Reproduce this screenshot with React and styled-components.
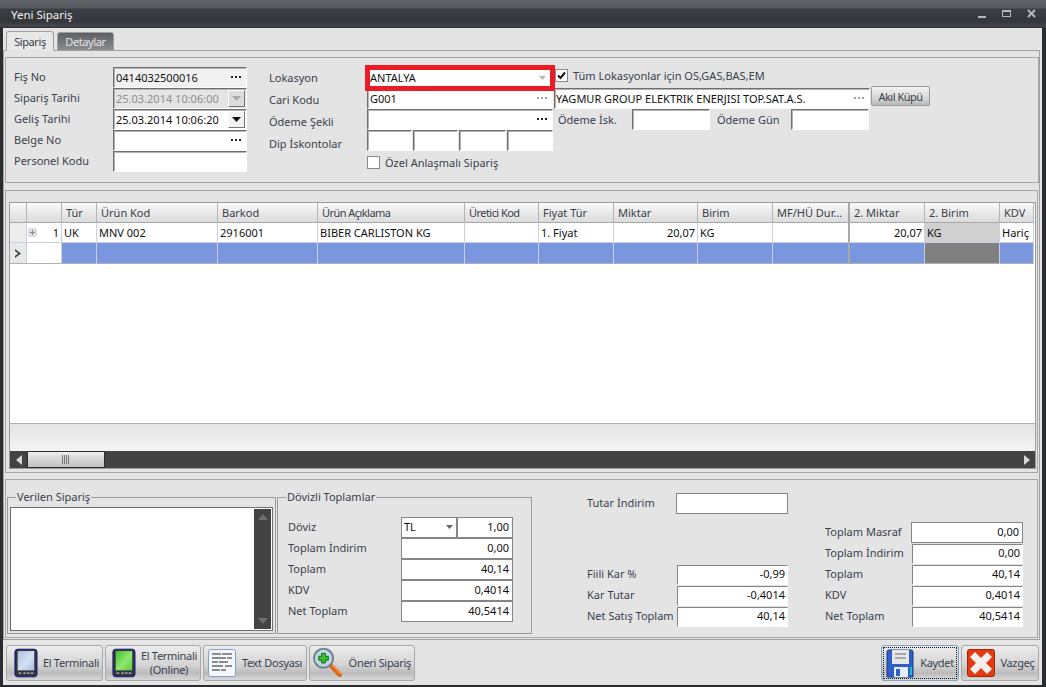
import styled, { createGlobalStyle } from 'styled-components';

const GlobalStyle = createGlobalStyle`
  html, body {
    margin: 0;
    padding: 0;
    background: #2a2c2f;
  }
  body {
    font-family: 'Noto Sans', 'Liberation Sans', sans-serif;
    font-size: 11px;
    color: #3a3f4c;
  }
`;

const columns = [
  { title: '', width: 17 },
  { title: '', width: 35 },
  { title: 'Tür', width: 35 },
  { title: 'Ürün Kod', width: 121 },
  { title: 'Barkod', width: 100 },
  { title: 'Ürün Açıklama', width: 147, tight: true },
  { title: 'Üretici Kod', width: 74, tight: true },
  { title: 'Fiyat Tür', width: 75 },
  { title: 'Miktar', width: 84 },
  { title: 'Birim', width: 75 },
  { title: 'MF/HÜ Dur…', width: 77 },
  { title: '2. Miktar', width: 75 },
  { title: '2. Birim', width: 75 },
  { title: 'KDV', width: 34 },
];

const rowValues = ['', '1', 'UK', 'MNV 002', '2916001', 'BIBER CARLISTON KG', '', '1. Fiyat', '20,07', 'KG', '', '20,07', 'KG', 'Hariç'];

const Dots = ({ faded }) => (
  <DotsIcon width="12" height="4" viewBox="0 0 12 4">
    <g fill={faded ? '#a0a0a0' : '#222'}>
      <rect x="1" y="1" width="2" height="2" />
      <rect x="5" y="1" width="2" height="2" />
      <rect x="9" y="1" width="2" height="2" />
    </g>
  </DotsIcon>
);

const DateField = ({ value, disabled }) => (
  <Field $disabled={disabled}>
    <FieldText>{value}</FieldText>
    <DropButton $disabled={disabled}>
      <svg width="9" height="5" viewBox="0 0 9 5">
        <path d="M0 0h9L4.500 5z" fill={disabled ? '#a9a9a9' : '#111'} />
      </svg>
    </DropButton>
  </Field>
);

const TerminalIcon = ({ green }) => (
  <svg width="25" height="30" viewBox="0 0 26 32">
    <rect x="1" y="1" width="24" height="30" rx="3" fill="#33363c" stroke="#10108a" />
    <defs>
      <linearGradient id={green ? 'scrG' : 'scrB'} x1="0" y1="0" x2="1" y2="1">
        <stop offset="0" stopColor={green ? '#3fc02c' : '#a9bfe4'} />
        <stop offset="0.55" stopColor={green ? '#8fe670' : '#d4e0f2'} />
        <stop offset="1" stopColor={green ? '#5ccb3f' : '#a6bde0'} />
      </linearGradient>
    </defs>
    <rect x="4" y="3" width="18" height="21" fill={`url(#${green ? 'scrG' : 'scrB'})`} />
    <g fill="#8f9299">
      <rect x="5" y="26" width="3" height="2" />
      <rect x="10" y="26" width="3" height="2" />
      <rect x="14" y="26" width="3" height="2" />
      <rect x="18" y="26" width="3" height="2" />
    </g>
  </svg>
);

const TextFileIcon = () => (
  <svg width="28" height="28" viewBox="0 0 28 28">
    <rect x="0.5" y="0.5" width="27" height="27" rx="2" fill="#f4f7fd" stroke="#7d9fd8" />
    <g fill="#8b8b8b">
      <rect x="4" y="4" width="9" height="2" />
      <rect x="14" y="4" width="10" height="2" />
      <rect x="4" y="8" width="14" height="2" />
      <rect x="19" y="8" width="5" height="2" />
      <rect x="4" y="12" width="6" height="2" />
      <rect x="11" y="12" width="9" height="2" />
      <rect x="4" y="16" width="11" height="2" />
      <rect x="17" y="16" width="7" height="2" />
      <rect x="4" y="20" width="8" height="2" />
      <rect x="13" y="20" width="5" height="2" />
    </g>
  </svg>
);

const SearchPlusIcon = () => (
  <svg width="32" height="32" viewBox="0 0 32 32">
    <path d="M19 19l9 9" stroke="#d9641c" strokeWidth="5" strokeLinecap="round" />
    <path d="M20 18l9 9" stroke="#f6a04a" strokeWidth="1.5" strokeLinecap="round" />
    <circle cx="11" cy="11" r="10" fill="#bcd6e4" stroke="#6f7f8a" strokeWidth="2" />
    <path d="M9 6h4v3h3v4h-3v3h-4v-3h-3v-4h3z" fill="#37c02e" stroke="#116a14" />
  </svg>
);

const SaveIcon = () => (
  <svg width="28" height="29" viewBox="0 0 28 29">
    <path d="M1 3a2 2 0 0 1 2-2h22a2 2 0 0 1 2 2v25h-26z" fill="#2c5fc8" stroke="#173a86" />
    <rect x="6" y="1" width="17" height="14" fill="#e6e6e6" />
    <g fill="#a8a8a8">
      <rect x="9" y="4" width="11" height="2" />
      <rect x="9" y="8" width="11" height="2" />
    </g>
    <rect x="8" y="18" width="14" height="10" fill="#e8eef8" />
    <rect x="10" y="20" width="4" height="7" fill="#2c5fc8" />
    <rect x="24" y="18" width="2" height="8" fill="#1cc0c8" />
  </svg>
);

const CancelIcon = () => (
  <svg width="28" height="28" viewBox="0 0 28 28">
    <rect x="0.500" y="0.500" width="27" height="27" rx="2" fill="#e53a10" stroke="#a02608" />
    <path d="M8 3l6 6 6-6 5 5-6 6 6 6-5 5-6-6-6 6-5-5 6-6-6-6z" fill="#f3efee" />
  </svg>
);

const App = () => (
  <>
    <GlobalStyle />
    <Window>
      <TitleBar>
        <Title>Yeni Sipariş</Title>
        <WinControls>
          <svg width="8" height="10" viewBox="0 0 8 10"><rect y="7" width="8" height="2" fill="#b5b7ba" /></svg>
          <svg width="9" height="10" viewBox="0 0 9 10"><rect x="0.500" y="1.500" width="8" height="6" fill="none" stroke="#b5b7ba" /><rect y="1" width="9" height="2" fill="#b5b7ba" /></svg>
          <svg width="9" height="10" viewBox="0 0 9 10"><path d="M1 1l7 7M8 1L1 8" stroke="#b5b7ba" strokeWidth="2" /></svg>
        </WinControls>
      </TitleBar>

      <Content>
        <TabStrip>
          <Tab $active $width={48}>Sipariş</Tab>
          <Tab $width={57}>Detaylar</Tab>
        </TabStrip>

        <TabPage>
          <FormPanel>
            <FormColumn $width={255}>
              <FormRow>
                <FormLabel $width={99}>Fiş No</FormLabel>
                <Field $width={134} $tint>
                  <FieldText $dark>0414032500016</FieldText>
                  <Dots />
                </Field>
              </FormRow>
              <FormRow>
                <FormLabel $width={99}>Sipariş Tarihi</FormLabel>
                <DateBox $width={134}><DateField value="25.03.2014 10:06:00" disabled /></DateBox>
              </FormRow>
              <FormRow>
                <FormLabel $width={99}>Geliş Tarihi</FormLabel>
                <DateBox $width={134}><DateField value="25.03.2014 10:06:20" /></DateBox>
              </FormRow>
              <FormRow>
                <FormLabel $width={99}>Belge No</FormLabel>
                <Field $width={134}>
                  <FieldText />
                  <Dots />
                </Field>
              </FormRow>
              <FormRow>
                <FormLabel $width={99}>Personel Kodu</FormLabel>
                <Field $width={134} />
              </FormRow>
            </FormColumn>

            <SplitColumn>
              <LabelStack>
                <FormLabel $tall $flush>Lokasyon</FormLabel>
                <FormLabel $tall $flush>Cari Kodu</FormLabel>
                <FormLabel $tall $flush>Ödeme Şekli</FormLabel>
                <FormLabel $tall $flush>Dip İskontolar</FormLabel>
              </LabelStack>
              <InputStack>
                <FormRow>
                  <Highlight>
                    <FieldText $dark>ANTALYA</FieldText>
                    <svg width="7" height="4" viewBox="0 0 7 4"><path d="M0 0h7L3.500 4z" fill="#b8b8b8" /></svg>
                  </Highlight>
                </FormRow>
                <FormRow>
                  <Field $width={186}>
                    <FieldText $dark>G001</FieldText>
                    <Dots faded />
                  </Field>
                </FormRow>
                <FormRow>
                  <Field $width={186}>
                    <FieldText />
                    <Dots />
                  </Field>
                </FormRow>
                <FormRow>
                  <DiscountRow>
                    <Field $width={45} />
                    <Field $width={45} />
                    <Field $width={47} />
                    <Field $width={46} />
                  </DiscountRow>
                </FormRow>
                <FormRow>
                  <CheckLine $lower>
                    <CheckBox />
                    Özel Anlaşmalı Sipariş
                  </CheckLine>
                </FormRow>
              </InputStack>
            </SplitColumn>

            <FormColumn $width={380}>
              <FormRow>
                <CheckLine $raised>
                  <CheckBox>
                    <svg width="9" height="9" viewBox="0 0 9 9"><path d="M1 4.500l2.500 2.500L8 1.500" fill="none" stroke="#111" strokeWidth="2" /></svg>
                  </CheckBox>
                  Tüm Lokasyonlar için OS,GAS,BAS,EM
                </CheckLine>
              </FormRow>
              <FormRow>
                <CustomerField>
                  <FieldText $dark>YAGMUR GROUP ELEKTRIK ENERJISI TOP.SAT.A.S.</FieldText>
                  <Dots faded />
                </CustomerField>
                <SmallButton>Akıl Küpü</SmallButton>
              </FormRow>
              <FormRow>
                <FormLabel $width={77} $indent={3} $flush>Ödeme İsk.</FormLabel>
                <Field $width={78} />
                <FormLabel $width={81} $indent={7} $flush>Ödeme Gün</FormLabel>
                <Field $width={78} />
              </FormRow>
            </FormColumn>
          </FormPanel>

          <GridPanel>
            <Grid>
              <HeaderRow>
                {columns.map((c, i) => (
                  <HeaderCell key={i} $width={c.width} $thick={i === 10} $tight={c.tight}>{c.title}</HeaderCell>
                ))}
              </HeaderRow>
              <DataRow>
                {rowValues.map((v, i) => (
                  <DataCell
                    key={i}
                    $width={columns[i].width}
                    $right={i === 1 || i === 8 || i === 11}
                    $head={i === 0}
                    $thick={i === 10}
                    $grey={i === 12}
                  >
                    {i === 0 ? null : v}
                    {i === 1 && (
                      <Expander>
                        <svg width="9" height="9" viewBox="0 0 9 9">
                          <path d="M2 4.500h5M4.500 2v5" stroke="#8a8a8a" />
                        </svg>
                      </Expander>
                    )}
                  </DataCell>
                ))}
              </DataRow>
              <NewRow>
                {columns.map((c, i) => (
                  <NewCell key={i} $width={c.width} $index={i} $thick={i === 10}>
                    {i === 0 && (
                      <svg width="7" height="9" viewBox="0 0 7 9"><path d="M0 0l6 4.500L0 9V7l3-2.500L0 2z" fill="#444" /></svg>
                    )}
                  </NewCell>
                ))}
              </NewRow>
              <GridBlank />
              <GridFooter />
              <ScrollBar>
                <ArrowButton>
                  <svg width="6" height="10" viewBox="0 0 6 10"><path d="M6 0v10L0 5z" fill="#d8d8d8" /></svg>
                </ArrowButton>
                <ScrollThumb>
                  <svg width="8" height="9" viewBox="0 0 8 9">
                    <path d="M0.500 0v9M2.500 0v9M4.500 0v9M6.500 0v9" stroke="#777" />
                  </svg>
                </ScrollThumb>
                <ScrollTrack />
                <ArrowButton>
                  <svg width="6" height="10" viewBox="0 0 6 10"><path d="M0 0v10l6-5z" fill="#d8d8d8" /></svg>
                </ArrowButton>
              </ScrollBar>
            </Grid>
          </GridPanel>

          <BottomPanel>
            <GroupBox $width={269}>
              <Legend>Verilen Sipariş</Legend>
              <MemoBox>
                <MemoBar>
                  <svg width="10" height="6" viewBox="0 0 10 6"><path d="M5 0l5 6H0z" fill="#6e6e6e" /></svg>
                  <svg width="10" height="6" viewBox="0 0 10 6"><path d="M0 0h10L5 6z" fill="#6e6e6e" /></svg>
                </MemoBar>
              </MemoBox>
            </GroupBox>

            <GroupBox $width={255} $pad>
              <Legend>Dövizli Toplamlar</Legend>
              <TotalRow>
                <TotalLabel>Döviz</TotalLabel>
                <PlainBox $width={56}>
                  TL
                  <svg width="7" height="4" viewBox="0 0 7 4"><path d="M0 0h7L3.500 4z" fill="#666" /></svg>
                </PlainBox>
                <PlainBox $width={56} $right>1,00</PlainBox>
              </TotalRow>
              <TotalRow>
                <TotalLabel>Toplam İndirim</TotalLabel>
                <PlainBox $width={112} $right>0,00</PlainBox>
              </TotalRow>
              <TotalRow>
                <TotalLabel>Toplam</TotalLabel>
                <PlainBox $width={112} $right>40,14</PlainBox>
              </TotalRow>
              <TotalRow>
                <TotalLabel>KDV</TotalLabel>
                <PlainBox $width={112} $right>0,4014</PlainBox>
              </TotalRow>
              <TotalRow>
                <TotalLabel>Net Toplam</TotalLabel>
                <PlainBox $width={112} $right>40,5414</PlainBox>
              </TotalRow>
            </GroupBox>

            <ProfitColumn>
              <TotalRow>
                <ProfitLabel $width={89}>Tutar İndirim</ProfitLabel>
                <PlainBox $width={112} />
              </TotalRow>
              <Spacer />
              <TotalRow>
                <ProfitLabel $width={90}>Fiili Kar %</ProfitLabel>
                <Sunken $width={111}>-0,99</Sunken>
              </TotalRow>
              <TotalRow>
                <ProfitLabel $width={90}>Kar Tutar</ProfitLabel>
                <Sunken $width={111}>-0,4014</Sunken>
              </TotalRow>
              <TotalRow>
                <ProfitLabel $width={90}>Net Satış Toplam</ProfitLabel>
                <Sunken $width={111}>40,14</Sunken>
              </TotalRow>
            </ProfitColumn>

            <NetColumn>
              <NetRow>
                <NetLabel>Toplam Masraf</NetLabel>
                <PlainBox $width={112} $right>0,00</PlainBox>
              </NetRow>
              <NetRow>
                <NetLabel>Toplam İndirim</NetLabel>
                <Sunken $width={111}>0,00</Sunken>
              </NetRow>
              <NetRow>
                <NetLabel>Toplam</NetLabel>
                <Sunken $width={111}>40,14</Sunken>
              </NetRow>
              <NetRow>
                <NetLabel>KDV</NetLabel>
                <Sunken $width={111}>0,4014</Sunken>
              </NetRow>
              <NetRow>
                <NetLabel>Net Toplam</NetLabel>
                <Sunken $width={111}>40,5414</Sunken>
              </NetRow>
            </NetColumn>
          </BottomPanel>
        </TabPage>

        <Toolbar>
          <ToolGroup>
            <ToolButton $width={97} $pad={7}>
              <TerminalIcon />
              <ToolText>El Terminali</ToolText>
            </ToolButton>
            <ToolButton $width={96} $pad={6}>
              <TerminalIcon green />
              <ToolText>El Terminali<br />(Online)</ToolText>
            </ToolButton>
            <ToolButton $width={104} $pad={4}>
              <TextFileIcon />
              <ToolText>Text Dosyası</ToolText>
            </ToolButton>
            <ToolButton $width={106} $pad={3}>
              <SearchPlusIcon />
              <ToolText>Öneri Sipariş</ToolText>
            </ToolButton>
          </ToolGroup>
          <ToolGroup>
            <ToolButton $width={78} $pad={4} $focused>
              <SaveIcon />
              <ToolText>Kaydet</ToolText>
            </ToolButton>
            <ToolButton $width={78} $pad={5}>
              <CancelIcon />
              <ToolText>Vazgeç</ToolText>
            </ToolButton>
          </ToolGroup>
        </Toolbar>
      </Content>
    </Window>
  </>
);

const Window = styled.div`
  width: 1046px;
  height: 687px;
  display: flex;
  flex-direction: column;
  overflow: hidden;
  background: #2a2c2f;
`;

const TitleBar = styled.div`
  height: 28px;
  flex: none;
  display: flex;
  align-items: center;
  justify-content: space-between;
  padding: 0 10px 0 11px;
  box-sizing: border-box;
  background: linear-gradient(#62656a 0, #55585d 8px, #3a3d42 9px, #34373c 22px, #44474c 26px, #2a2c30 28px);
`;

const Title = styled.div`
  color: #f0f0f0;
  font-size: 11.5px;
`;

const WinControls = styled.div`
  display: flex;
  gap: 16px;
  align-items: center;
`;

const Content = styled.div`
  flex: 1;
  min-height: 0;
  margin: 0 4px 2px 3px;
  display: flex;
  flex-direction: column;
  background: #e4e4e4;
`;

const TabStrip = styled.div`
  height: 22px;
  flex: none;
  display: flex;
  align-items: flex-end;
  padding: 2px 0 0 3px;
  gap: 3px;
  box-sizing: border-box;
`;

const Tab = styled.div`
  width: ${p => p.$width}px;
  height: ${p => (p.$active ? '20px' : '18px')};
  display: flex;
  align-items: center;
  justify-content: center;
  box-sizing: border-box;
  letter-spacing: -0.4px;
  border: 1px solid #a0a0a0;
  border-bottom: ${p => (p.$active ? '1px solid #e4e4e4' : 'none')};
  border-radius: 3px 3px 0 0;
  margin-bottom: ${p => (p.$active ? '-1px' : '0')};
  background: ${p => (p.$active ? '#e8e8e8' : 'linear-gradient(#5c5e62, #73767a 50%, #8a8c90)')};
  color: ${p => (p.$active ? '#3a3f4c' : '#e4e4e4')};
  position: relative;
  z-index: 1;
`;

const TabPage = styled.div`
  flex: 1;
  min-height: 0;
  display: flex;
  flex-direction: column;
  border: 1px solid #a0a0a0;
  margin-right: 2px;
`;

const FormPanel = styled.div`
  height: 126px;
  flex: none;
  margin: 6px 0 0 1px;
  padding: 9px 0 0 8px;
  box-sizing: border-box;
  display: flex;
  border: 1px solid #a6a6a6;
`;

const FormColumn = styled.div`
  width: ${p => p.$width}px;
  flex: none;
  display: flex;
  flex-direction: column;
`;

const SplitColumn = styled.div`
  width: 286px;
  flex: none;
  display: flex;
`;

const LabelStack = styled.div`
  width: 98px;
  flex: none;
  display: flex;
  flex-direction: column;
`;

const InputStack = styled.div`
  flex: 1;
  display: flex;
  flex-direction: column;
`;

const FormRow = styled.div`
  height: 21px;
  flex: none;
  display: flex;
  align-items: flex-start;
`;

const FormLabel = styled.div`
  width: ${p => (p.$width ? `${p.$width}px` : '100%')};
  height: ${p => (p.$tall ? '22px' : '21px')};
  flex: none;
  display: flex;
  align-items: center;
  padding-left: ${p => p.$indent || 0}px;
  padding-bottom: ${p => (p.$flush ? '1px' : '3px')};
  box-sizing: border-box;
  white-space: nowrap;
`;

const Field = styled.div`
  width: ${p => (p.$width ? `${p.$width}px` : '100%')};
  height: 21px;
  flex: none;
  display: flex;
  align-items: center;
  padding: 0 4px 1px 2px;
  box-sizing: border-box;
  border: 1px solid #fff;
  border-top: 1px solid #6e6e6e;
  border-left: 1px solid #6e6e6e;
  box-shadow: inset 1px 1px 0 #b4b4b4;
  background: ${p => (p.$tint ? '#f1f1f1' : p.$disabled ? '#e4e4e4' : '#fff')};
  color: ${p => (p.$disabled ? '#8e8e8e' : '#111')};
  white-space: nowrap;
`;

const CustomerField = styled(Field)`
  width: 316px;
  margin-left: -1px;
  padding-left: 1px;
`;

const FieldText = styled.div`
  flex: 1;
  min-width: 0;
  overflow: hidden;
  color: ${p => (p.$dark ? '#111' : 'inherit')};
`;

const DotsIcon = styled.svg`
  flex: none;
`;

const DropButton = styled.div`
  width: 17px;
  height: 17px;
  margin-right: -3px;
  display: flex;
  align-items: center;
  justify-content: center;
  box-sizing: border-box;
  border: 1px solid #777;
  border-top-color: #fff;
  border-left-color: #fff;
  background: ${p => (p.$disabled ? '#dcdcdc' : '#f2f2f2')};
`;

const DateBox = styled.div`
  width: ${p => p.$width}px;
  flex: none;
`;

const Highlight = styled.div`
  width: 190px;
  height: 26px;
  flex: none;
  margin: -2px 0 0 -2px;
  display: flex;
  align-items: center;
  padding: 0 4px 1px 0;
  box-sizing: border-box;
  border: 5px solid #ed1c24;
  background: #fff;
  position: relative;
  z-index: 2;
`;

const DiscountRow = styled.div`
  display: flex;
  gap: 1px;
`;

const CheckLine = styled.label`
  height: 21px;
  display: flex;
  align-items: center;
  gap: 5px;
  white-space: nowrap;
  margin-top: ${p => (p.$lower ? '1px' : '0')};
  padding-bottom: ${p => (p.$raised ? '5px' : '0')};
  box-sizing: border-box;
`;

const CheckBox = styled.span`
  width: 11px;
  height: 11px;
  flex: none;
  display: flex;
  align-items: center;
  justify-content: center;
  border: 1px solid #8a8a8a;
  background: #fff;
`;

const SmallButton = styled.div`
  width: 59px;
  height: 20px;
  margin: -2px 0 0 1px;
  display: flex;
  align-items: center;
  justify-content: center;
  box-sizing: border-box;
  letter-spacing: -0.5px;
  border: 1px solid #9b9b9b;
  border-radius: 2px;
  background: linear-gradient(#f2f2f2, #d8d8d8 60%, #b6b6b6);
`;

const GridPanel = styled.div`
  height: 283px;
  flex: none;
  margin: 7px 1px 0 1px;
  padding: 11px 1px 3px 3px;
  box-sizing: border-box;
  border: 1px solid #a6a6a6;
`;

const Grid = styled.div`
  height: 100%;
  display: flex;
  flex-direction: column;
  background: #fff;
  border: 1px solid #9a9a9a;
  box-sizing: border-box;
  overflow: hidden;
`;

const HeaderRow = styled.div`
  height: 20px;
  flex: none;
  display: flex;
`;

const HeaderCell = styled.div`
  width: ${p => p.$width}px;
  flex: none;
  padding: 0 0 0 4px;
  box-sizing: border-box;
  display: flex;
  align-items: center;
  white-space: nowrap;
  overflow: hidden;
  letter-spacing: ${p => (p.$tight ? '-0.55px' : '0')};
  border-right: ${p => (p.$thick ? '2px solid #a8a8a8' : '1px solid #b5b5b5')};
  border-bottom: 1px solid #a8a8a8;
  background: linear-gradient(#fafafa, #e8e8e8 55%, #dcdcdc);
`;

const DataRow = styled.div`
  height: 20px;
  flex: none;
  display: flex;
`;

const DataCell = styled.div`
  width: ${p => p.$width}px;
  flex: none;
  padding: 0 2px 0 2px;
  box-sizing: border-box;
  display: flex;
  align-items: center;
  justify-content: ${p => (p.$right ? 'flex-end' : 'flex-start')};
  color: #111;
  white-space: nowrap;
  overflow: hidden;
  position: relative;
  border-right: ${p => (p.$thick ? '2px solid #a8a8a8' : '1px solid #c8d0e4')};
  border-bottom: 1px solid #c8d0e4;
  background: ${p => (p.$grey ? '#d0d0d0' : p.$head ? '#ececec' : '#fff')};
`;

const Expander = styled.span`
  position: absolute;
  left: 1px;
  top: 5px;
  width: 9px;
  height: 9px;
  display: flex;
  background: #dedede;
  border-radius: 2px;
`;

const NewRow = styled.div`
  height: 21px;
  flex: none;
  display: flex;
`;

const NewCell = styled.div`
  width: ${p => p.$width}px;
  flex: none;
  box-sizing: border-box;
  display: flex;
  align-items: center;
  justify-content: center;
  border-right: ${p => (p.$thick ? '2px solid #a8a8a8' : '1px solid #c8d0e4')};
  border-bottom: 1px solid #b0b0b0;
  background: ${p =>
    p.$index === 0 ? '#e8e8e8' : p.$index === 1 ? '#fff' : p.$index === 12 ? '#808080' : '#7a96de'};
`;

const GridBlank = styled.div`
  flex: 1;
  background: #fff;
`;

const GridFooter = styled.div`
  height: 27px;
  flex: none;
  border-top: 1px solid #b0b0b0;
  background: linear-gradient(#e4e4e4, #f4f4f4);
`;

const ScrollBar = styled.div`
  height: 17px;
  flex: none;
  display: flex;
  background: #434343;
`;

const ArrowButton = styled.div`
  width: 17px;
  flex: none;
  display: flex;
  align-items: center;
  justify-content: center;
`;

const ScrollThumb = styled.div`
  width: 78px;
  flex: none;
  display: flex;
  align-items: center;
  justify-content: center;
  box-sizing: border-box;
  border: 1px solid #2e2e2e;
  background: linear-gradient(#f0f0f0, #d4d4d4 50%, #c4c4c4);
`;

const ScrollTrack = styled.div`
  flex: 1;
`;

const BottomPanel = styled.div`
  flex: 1;
  min-height: 0;
  margin: 6px 1px 1px 1px;
  padding: 13px 0 3px 1px;
  box-sizing: border-box;
  display: flex;
  gap: 1px;
  border: 1px solid #a6a6a6;
`;

const GroupBox = styled.div`
  width: ${p => p.$width}px;
  flex: none;
  margin-top: 4px;
  box-sizing: border-box;
  position: relative;
  border: 1px solid #9a9a9a;
  padding: ${p => (p.$pad ? '19px 18px 0 10px' : '9px 2px 2px 2px')};
  display: flex;
  flex-direction: column;
`;

const Legend = styled.div`
  position: absolute;
  top: -9px;
  left: 8px;
  padding: 0 1px;
  background: #e4e4e4;
`;

const MemoBox = styled.div`
  flex: 1;
  display: flex;
  justify-content: flex-end;
  background: #fff;
  border: 1px solid #6e6e6e;
  padding: 1px;
`;

const MemoBar = styled.div`
  width: 17px;
  display: flex;
  flex-direction: column;
  align-items: center;
  justify-content: space-between;
  padding: 5px 0;
  box-sizing: border-box;
  background: #434343;
`;

const TotalRow = styled.div`
  height: 21px;
  flex: none;
  display: flex;
  align-items: center;
`;

const TotalLabel = styled.div`
  width: 113px;
  flex: none;
  padding-bottom: 2px;
  white-space: nowrap;
`;

const PlainBox = styled.div`
  width: ${p => p.$width}px;
  height: 21px;
  flex: none;
  padding: 0 3px 2px 2px;
  box-sizing: border-box;
  display: flex;
  align-items: center;
  justify-content: ${p => (p.$right ? 'flex-end' : 'space-between')};
  color: #111;
  border: 1px solid #858585;
  background: #fff;
`;

const Sunken = styled.div`
  width: ${p => p.$width}px;
  height: 20px;
  flex: none;
  padding: 0 2px 2px;
  box-sizing: border-box;
  display: flex;
  align-items: center;
  justify-content: flex-end;
  color: #111;
  background: #fff;
  border: 1px solid #fff;
  border-top: 1px solid #858585;
  border-left: 1px solid #858585;
`;

const ProfitColumn = styled.div`
  width: 205px;
  flex: none;
  margin-left: 54px;
  padding-bottom: 7px;
  display: flex;
  flex-direction: column;
`;

const Spacer = styled.div`
  flex: 1;
`;

const ProfitLabel = styled.div`
  width: ${p => p.$width}px;
  flex: none;
  padding-bottom: 2px;
  white-space: nowrap;
`;

const NetColumn = styled.div`
  width: 198px;
  flex: none;
  margin-left: 32px;
  padding-top: 29px;
  display: flex;
  flex-direction: column;
`;

const NetRow = styled(TotalRow)`
  justify-content: space-between;
  white-space: nowrap;
`;

const NetLabel = styled.span`
  padding-bottom: 2px;
`;

const Toolbar = styled.div`
  height: 45px;
  flex: none;
  display: flex;
  justify-content: space-between;
  padding: 5px 3px 4px 3px;
  box-sizing: border-box;
`;

const ToolGroup = styled.div`
  display: flex;
  gap: 2px;
`;

const ToolButton = styled.div`
  width: ${p => p.$width}px;
  flex: none;
  display: flex;
  align-items: center;
  gap: 5px;
  padding: 0 3px 0 ${p => p.$pad}px;
  box-sizing: border-box;
  border: 1px solid ${p => (p.$focused ? '#7fa6c8' : '#a8a8a8')};
  border-radius: 3px;
  outline: ${p => (p.$focused ? '1px dotted #111' : 'none')};
  outline-offset: -3px;
  background: linear-gradient(#ececec, #d4d4d4 55%, #bcbcbc 80%, #d8d8d8);
`;

const ToolText = styled.div`
  flex: 1;
  text-align: center;
  line-height: 14px;
  letter-spacing: -0.3px;
  white-space: nowrap;
`;

export default App;
